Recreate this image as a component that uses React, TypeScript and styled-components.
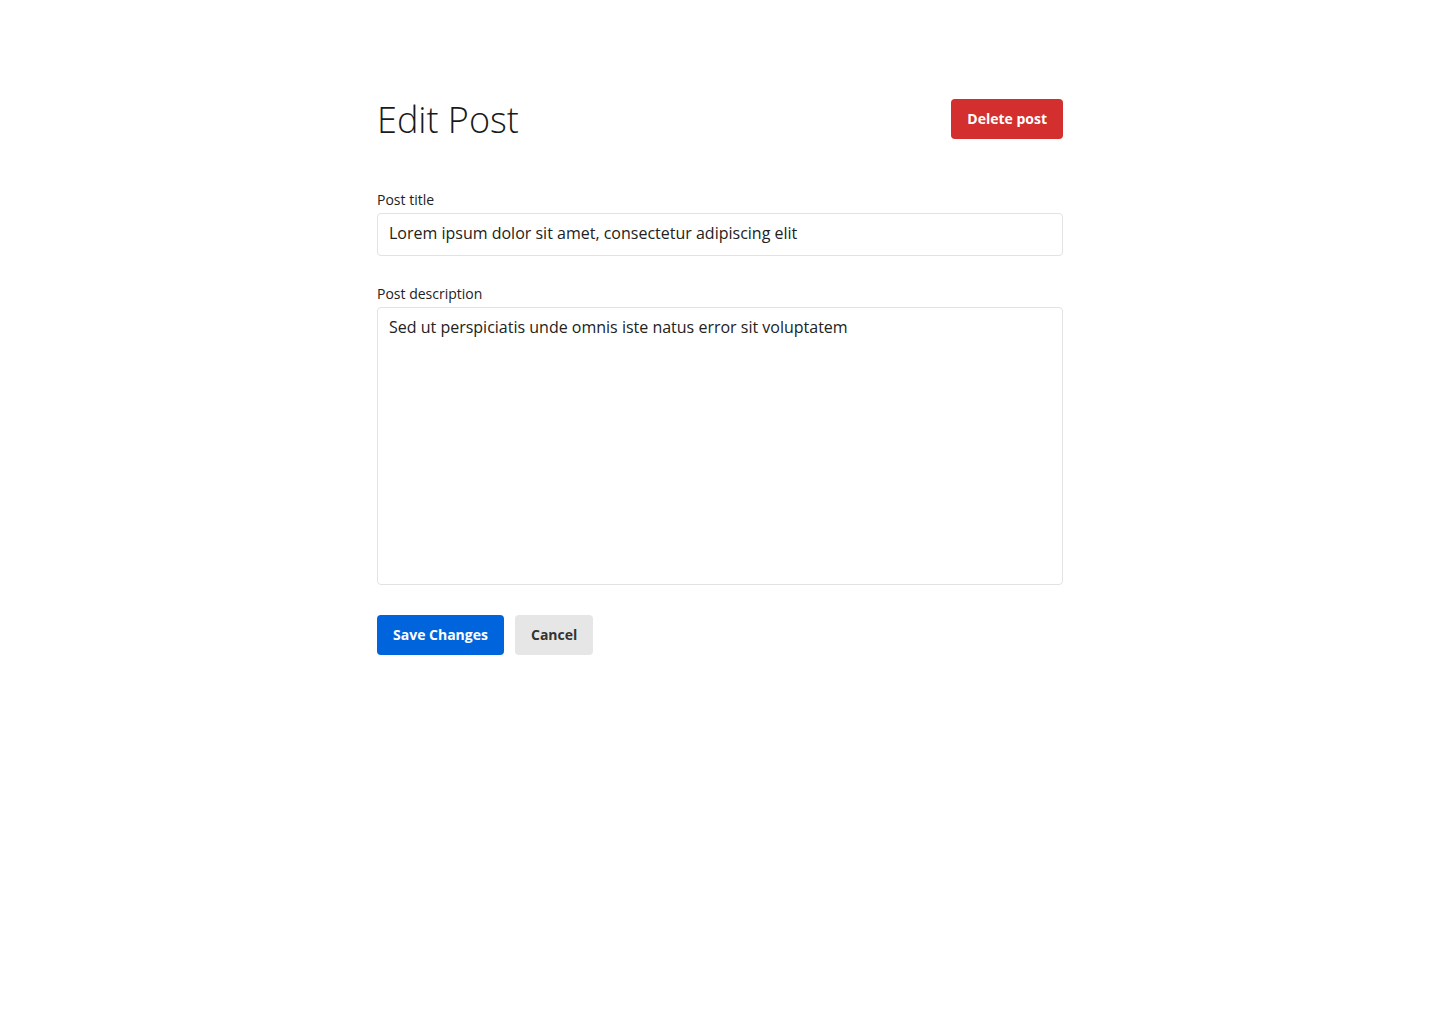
import React from "react";
import styled, { createGlobalStyle } from "styled-components";

const Global = createGlobalStyle`
  * { box-sizing: border-box; }
  html, body { margin: 0; padding: 0; background: #ffffff; }
  body { font-family: "Open Sans", "Noto Sans", sans-serif; color: #222222; }
`;

const Page = styled.main`
  width: 686px;
  margin: 0 auto;
  padding-top: 99px;
  display: flex;
  flex-direction: column;
`;

const Header = styled.header`
  display: flex;
  align-items: center;
  justify-content: space-between;
  height: 40px;
  margin-bottom: 51px;
`;

const Title = styled.h1`
  margin: 0;
  font-size: 36px;
  font-weight: 300;
  line-height: 40px;
  color: #1a1a1a;
  position: relative;
  top: 1px;
`;

const Button = styled.button<{ $variant: "danger" | "primary" | "secondary" }>`
  height: 40px;
  padding: 0 16px 2px;
  border: none;
  border-radius: 4px;
  font-family: "Open Sans", sans-serif;
  font-size: 14px;
  font-weight: 700;
  cursor: pointer;
  background: ${(p) =>
    p.$variant === "danger" ? "#d32f2f" : p.$variant === "primary" ? "#0064dc" : "#e6e6e6"};
  color: ${(p) => (p.$variant === "secondary" ? "#333333" : "#ffffff")};
`;

const Field = styled.div<{ $gap: number }>`
  display: flex;
  flex-direction: column;
  margin-bottom: ${(p) => p.$gap}px;
`;

const Label = styled.label`
  font-size: 14px;
  line-height: 20px;
  color: #222222;
  margin-bottom: 3px;
`;

const Input = styled.input`
  height: 43px;
  padding: 0 11px 4px;
  border: 1px solid #e2e2e2;
  border-radius: 4px;
  font-family: "Open Sans", sans-serif;
  font-size: 16px;
  color: #222222;
  outline: none;
`;

const TextArea = styled.textarea`
  height: 278px;
  padding: 7px 11px;
  border: 1px solid #e2e2e2;
  border-radius: 4px;
  font-family: "Open Sans", sans-serif;
  font-size: 16px;
  line-height: 24px;
  color: #222222;
  resize: none;
  outline: none;
`;

const Actions = styled.div`
  display: flex;
  gap: 11px;
`;

export default function App() {
  return (
    <>
      <Global />
      <Page>
        <Header>
          <Title>Edit Post</Title>
          <Button $variant="danger">Delete post</Button>
        </Header>
        <Field $gap={28}>
          <Label>Post title</Label>
          <Input defaultValue="Lorem ipsum dolor sit amet, consectetur adipiscing elit" />
        </Field>
        <Field $gap={30}>
          <Label>Post description</Label>
          <TextArea defaultValue="Sed ut perspiciatis unde omnis iste natus error sit voluptatem" />
        </Field>
        <Actions>
          <Button $variant="primary">Save Changes</Button>
          <Button $variant="secondary">Cancel</Button>
        </Actions>
      </Page>
    </>
  );
}
